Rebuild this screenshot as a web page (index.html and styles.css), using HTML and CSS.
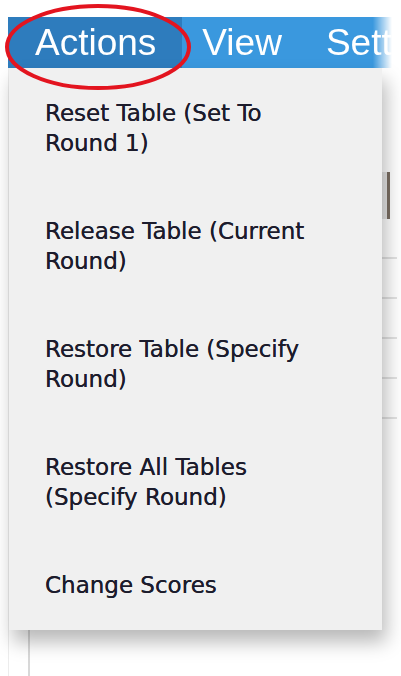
FILE: index.html
```html
<!DOCTYPE html>
<html lang="en">

<head>
    <meta charset="UTF-8">
    <meta name="viewport" content="width=device-width, initial-scale=1.0">
    <title>Actions Menu</title>
    <link rel="stylesheet" href="styles.css">
</head>

<body>
    <div class="app">
        <nav class="menubar">
            <div class="menu-item active">Actions</div>
            <div class="menu-item">View</div>
            <div class="menu-item">Settings</div>
        </nav>

        <!-- table behind the dropdown, only its edges show -->
        <div class="table-area">
            <div class="table-head"></div>
            <div class="table-row"></div>
            <div class="table-row"></div>
            <div class="table-row"></div>
            <div class="table-row"></div>
            <div class="table-row"></div>
        </div>

        <ul class="dropdown">
            <li>Reset Table (Set To<br>Round 1)</li>
            <li>Release Table (Current<br>Round)</li>
            <li>Restore Table (Specify<br>Round)</li>
            <li>Restore All Tables<br>(Specify Round)</li>
            <li>Change Scores</li>
        </ul>

        <svg class="highlight" width="192" height="90" viewBox="0 0 192 90">
            <ellipse cx="96" cy="45" rx="91" ry="41" fill="none" stroke="#e3141f" stroke-width="4" />
        </svg>
    </div>
</body>

</html>
```

FILE: styles.css
```css
html,
body {
    margin: 0;
    height: 676px;
    overflow: hidden;
    background-color: #fff;
    font-family: 'Liberation Sans', Arial, sans-serif;
}

.app {
    position: relative; /* context for the dropdown and the circle */
    width: 390px;
    height: 676px;
    margin-left: 8px;
    padding-top: 17px;
    box-sizing: border-box;
}

.menubar {
    display: flex;
    width: 384px;
    height: 51px;
    overflow: hidden; /* last menu is cut at the edge */
    background-color: #3a98de;
    -webkit-mask-image: linear-gradient(to right, #000 95%, transparent);
    mask-image: linear-gradient(to right, #000 95%, transparent);
}

.menu-item {
    display: flex;
    align-items: center;
    padding: 0 24px 0 20px;
    font-size: 37px;
    color: #fff;
    white-space: nowrap;
}

.menu-item.active {
    background-color: #2e7cbd;
    padding: 0 26px 0 27px;
}

.table-area {
    height: 608px;
    box-sizing: border-box;
    border-left: 1px solid #ececec;
    padding-top: 104px;
    background: linear-gradient(#d8d8d8, #d8d8d8) 19px 0 / 2px 100% no-repeat; /* first column line */
}

.table-head {
    height: 47px;
    background-color: #e6e6e6;
    border-right: 3px solid #7a6e62;
    width: 378px;
    margin-bottom: 38px;
}

.table-row {
    height: 38px;
    border-top: 2px solid #e2e2e2;
    width: 388px;
}

.dropdown {
    position: absolute;
    top: 68px;
    left: 1px;
    width: 373px;
    margin: 0;
    padding: 30px 0 30px 36px;
    box-sizing: border-box;
    list-style: none;
    display: flex;
    flex-direction: column;
    gap: 58px;
    background-color: #f0f0f0;
    box-shadow: 4px 12px 18px rgba(0, 0, 0, 0.28);
    font-family: 'DejaVu Sans', Tahoma, sans-serif;
    font-size: 23px;
    line-height: 30px;
    color: #1c1c2c;
    text-shadow: 0 0 0.4px #1c1c2c;
}

.highlight {
    position: absolute;
    top: 2px;
    left: -6px;
}
```
